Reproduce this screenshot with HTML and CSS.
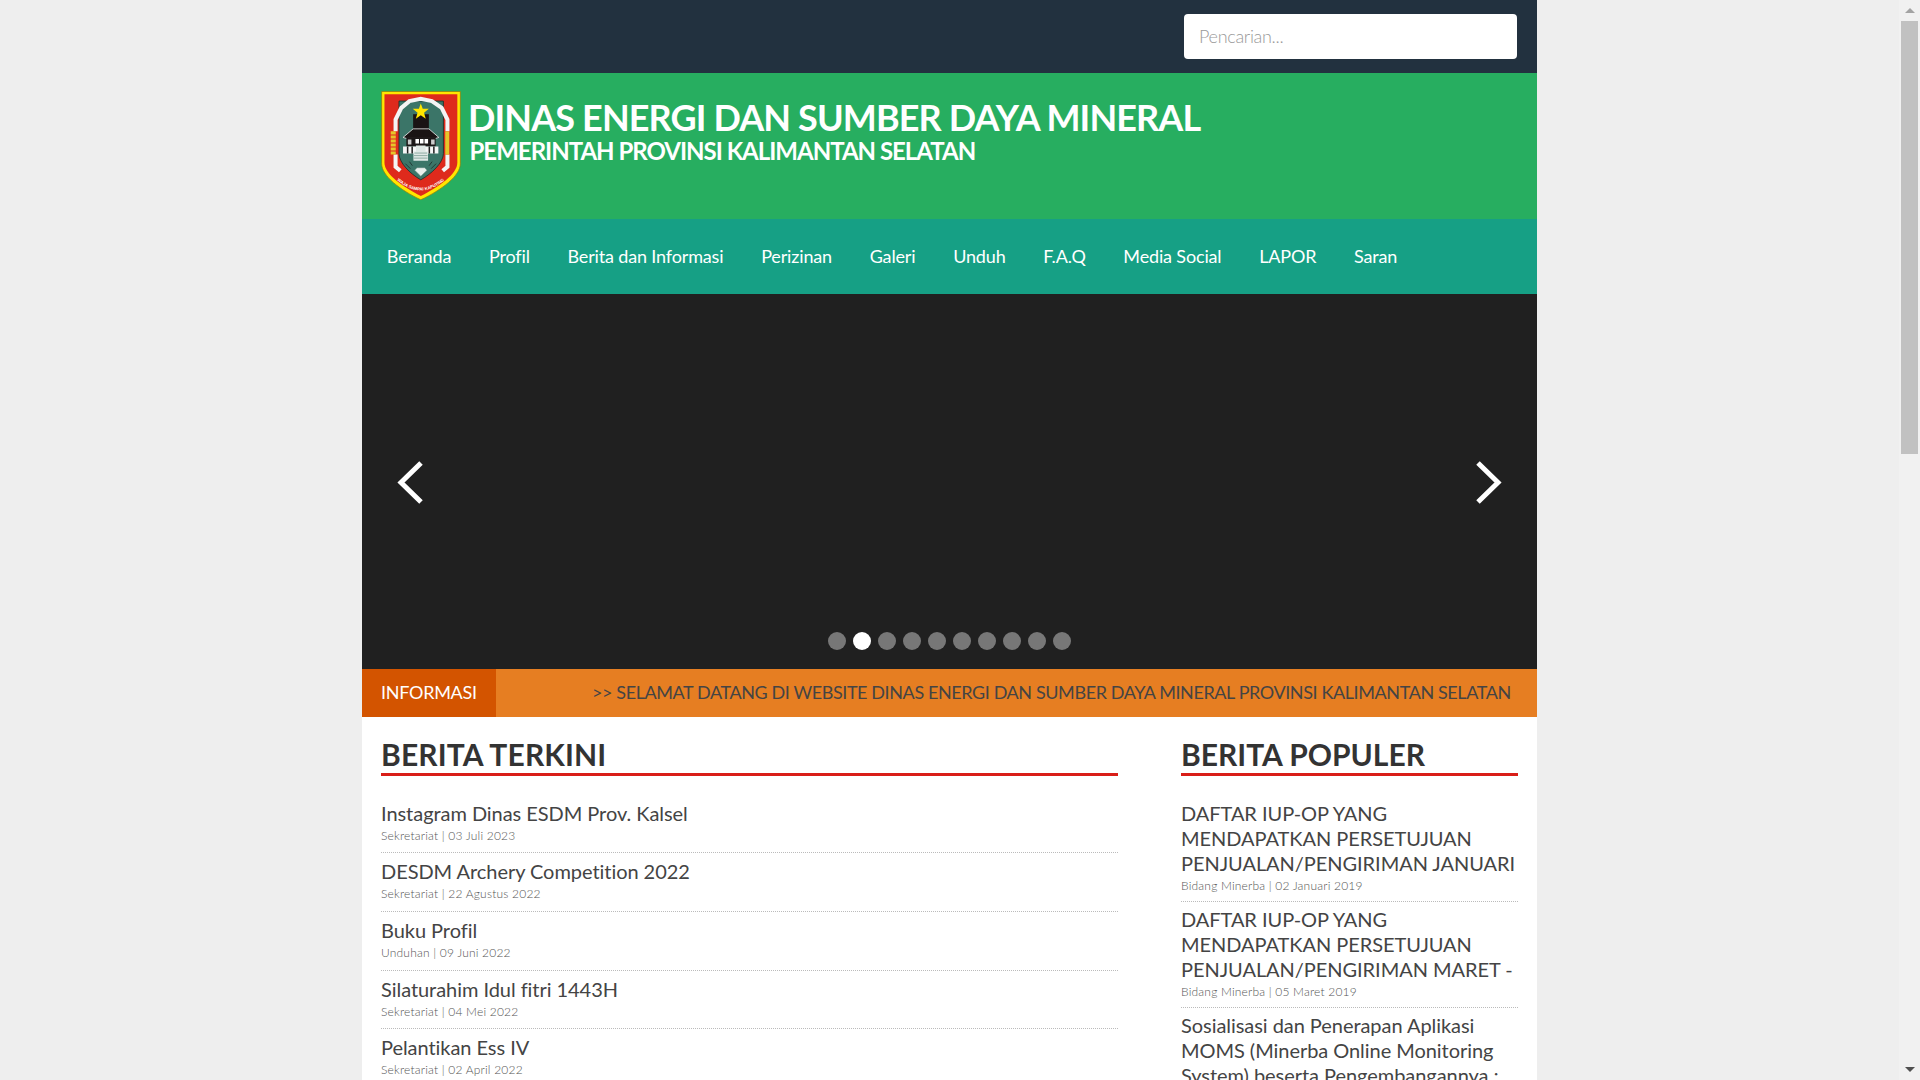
FILE: index.html
```html
<!DOCTYPE html>
<html lang="id">
<head>
<meta charset="utf-8">
<title>Dinas Energi dan Sumber Daya Mineral</title>
<link rel="stylesheet" href="styles.css">
</head>
<body>
<div class="viewport">
  <div class="page">
    <header class="topbar">
      <input class="search" type="text" placeholder="Pencarian...">
    </header>
    <div class="brand">
      <svg class="logo" viewBox="0 0 79 108" aria-label="Lambang Kalimantan Selatan">
        <path d="M.5.5H78.500V72C78.500 84 60 98 39.300 107.800 18.600 98 .5 84 .5 72Z" fill="#ffe600" stroke="#8a7a10" stroke-width=".7"/>
        <path d="M3.300 3.300H75.500V71C75.500 82 58 94.500 39.300 104 20.600 94.500 3.300 82 3.300 71Z" fill="#de2a1c"/>
        <path d="M17.700 10H61.700V62C61.700 71 50 82 39.300 88 28.600 82 17.700 71 17.700 62Z" fill="#3b7568" stroke="#14302a" stroke-width=".8"/>
        <path d="M14.300 40V28.300L20 16.700 28 10 39.300 7.700 50.300 10 60 16.700 65.700 28.300V40" fill="none" stroke="#f4f4f4" stroke-width="4"/>
        <path d="M14.300 63V75L19 79M65.700 63V75L61 79" fill="none" stroke="#f4f4f4" stroke-width="4"/>
        <path d="M12 40V63" stroke="#e6c52a" stroke-width="5" fill="none" stroke-dasharray="3 1"/>
        <path d="M65.500 40V63" stroke="#e6c52a" stroke-width="4" fill="none"/>
        <path d="M31.700 23H47.300V44H31.700Z" fill="#1a1414"/>
        <path d="M39.300 12.500 41.200 17.500 47.300 17.700 42.500 21.500 44.200 27.400 39.300 24 34.400 27.400 36.100 21.500 31.300 17.700 37.400 17.500Z" fill="#ffe600"/>
        <path d="M21.700 46 31.700 37.500H47.300L57.200 46 54 47H25Z" fill="#1a1414" stroke="#eee" stroke-width=".8"/>
        <path d="M25 46H54V55H25Z" fill="#1c1818"/>
        <path d="M34 47.500H37.500V52H34ZM38.500 47.500H42V52H38.500ZM43 47.500H46.500V52H43Z" fill="#fff"/>
        <path d="M26.500 48H30V53H26.500ZM49.500 48H53V53H49.500Z" fill="#ccc"/>
        <path d="M21.700 55H56.700V62H21.700Z" fill="#f6f6f6"/>
        <path d="M25.500 55H27V62H25.500ZM30 55H31.500V62H30ZM47 55H48.500V62H47ZM51.500 55H53V62H51.500Z" fill="#222"/>
        <path d="M34.500 54H44V60H46.500V69H32V60H34.500Z" fill="#dfe8e5"/>
        <path d="M33 61.500H45.500M32.500 64H46M32.500 66.500H46" stroke="#5b8479" stroke-width=".6"/>
        <path d="M24 72 29 77M54.500 72 49.500 77M28 70 31 74M50.500 70 47.500 74" stroke="#1c2c29" stroke-width=".8"/>
        <path d="M35.500 76H43.200L45.500 78.500 39.300 84.500 33.200 78.500Z" fill="#e8efec" stroke="#5b8479" stroke-width=".5"/>
        <path id="motto" d="M11.500 84.500Q39.300 112.500 67 84.500" fill="none"/>
        <text class="motto"><textPath href="#motto" startOffset="50%" text-anchor="middle">WAJA SAMPAI KAPUTING</textPath></text>
      </svg>
      <div class="brand-text">
        <h1>DINAS ENERGI DAN SUMBER DAYA MINERAL</h1>
        <h2>PEMERINTAH PROVINSI KALIMANTAN SELATAN</h2>
      </div>
    </div>
    <nav class="nav">
      <a>Beranda</a><a>Profil</a><a>Berita dan Informasi</a><a>Perizinan</a><a>Galeri</a><a>Unduh</a><a>F.A.Q</a><a>Media Social</a><a>LAPOR</a><a>Saran</a>
    </nav>
    <section class="slider">
      <svg class="arrow" viewBox="0 0 27 45"><path d="M24 3 4 22.500 24 42" fill="none" stroke="#fff" stroke-width="5"/></svg>
      <svg class="arrow" viewBox="0 0 27 45"><path d="M3 3 23 22.500 3 42" fill="none" stroke="#fff" stroke-width="5"/></svg>
      <div class="dots">
        <i></i><i class="on"></i><i></i><i></i><i></i><i></i><i></i><i></i><i></i><i></i>
      </div>
    </section>
    <div class="ticker">
      <span class="ticker-label">INFORMASI</span>
      <span class="ticker-text">&gt;&gt; SELAMAT DATANG DI WEBSITE DINAS ENERGI DAN SUMBER DAYA MINERAL PROVINSI KALIMANTAN SELATAN</span>
    </div>
    <main class="content">
      <section class="col-main">
        <h3>BERITA TERKINI</h3>
        <ul class="news">
          <li><a>Instagram Dinas ESDM Prov. Kalsel</a><small>Sekretariat | 03 Juli 2023</small></li>
          <li><a>DESDM Archery Competition 2022</a><small>Sekretariat | 22 Agustus 2022</small></li>
          <li><a>Buku Profil</a><small>Unduhan | 09 Juni 2022</small></li>
          <li><a>Silaturahim Idul fitri 1443H</a><small>Sekretariat | 04 Mei 2022</small></li>
          <li><a>Pelantikan Ess IV</a><small>Sekretariat | 02 April 2022</small></li>
        </ul>
      </section>
      <aside class="col-side">
        <h3>BERITA POPULER</h3>
        <ul class="news">
          <li><a>DAFTAR IUP-OP YANG MENDAPATKAN PERSETUJUAN PENJUALAN/PENGIRIMAN JANUARI</a><small>Bidang Minerba | 02 Januari 2019</small></li>
          <li><a>DAFTAR IUP-OP YANG MENDAPATKAN PERSETUJUAN PENJUALAN/PENGIRIMAN MARET -</a><small>Bidang Minerba | 05 Maret 2019</small></li>
          <li><a>Sosialisasi dan Penerapan Aplikasi MOMS (Minerba Online Monitoring System) beserta Pengembangannya ;</a><small>Bidang Minerba</small></li>
        </ul>
      </aside>
    </main>
  </div>
</div>
<div class="scrollbar">
  <span class="sb-btn"><b class="up"></b></span>
  <span class="sb-thumb"></span>
  <span class="sb-btn"><b class="down"></b></span>
</div>
</body>
</html>
```
FILE: styles.css
```css
* { box-sizing: border-box; }
html, body { margin: 0; height: 100%; overflow: hidden; }
body {
  display: flex;
  background: #eee;
  font-family: Lato, "Open Sans", sans-serif;
  font-size: 18px;
  color: #333;
}
.viewport { flex: 1; height: 1080px; overflow: hidden; }
.page { width: 1175px; margin: 0 auto; background: #fff; }

.topbar {
  height: 73px;
  background: #22313f;
  display: flex;
  justify-content: flex-end;
  align-items: flex-start;
  padding: 14px 20px 0 0;
}
.search {
  width: 333px;
  height: 45px;
  border: 0;
  border-radius: 4px;
  padding: 0 15px 2px;
  background: #fff;
  font: 300 18px Lato, sans-serif;
  letter-spacing: -0.3px;
}
.search::placeholder { color: #999; opacity: 1; }

.brand {
  height: 146px;
  background: #27ae60;
  display: flex;
  align-items: flex-start;
  gap: 7px;
  padding: 18px 0 0 19px;
  color: #fff;
}
.logo { width: 80px; height: 109px; flex: none; }
.motto { font: 700 4.200px "Liberation Sans", sans-serif; fill: #fff; }
.brand-text { padding-top: 8px; }
.brand-text h1 { margin: 0; font-size: 36px; font-weight: 700; line-height: 36px; letter-spacing: -0.87px; }
.brand-text h2 { margin: 0 0 0 1.500px; font-size: 24px; font-weight: 700; line-height: 32px; letter-spacing: -1px; }

.nav {
  height: 75px;
  background: #16a085;
  display: flex;
  align-items: center;
  padding: 0 0 2px 6px;
}
.nav a { padding: 0 18.850px; color: #fff; font-size: 18px; letter-spacing: -0.15px; }

.slider {
  height: 375px;
  background: #202020;
  position: relative;
  display: flex;
  justify-content: space-between;
  align-items: flex-start;
  padding: 166px 35px 0;
}
.arrow { width: 27px; height: 45px; }
.dots {
  position: absolute;
  left: 466px;
  top: 338px;
  display: flex;
  gap: 7px;
}
.dots i { width: 18px; height: 18px; border-radius: 50%; background: #777; }
.dots i.on { background: #fff; }

.ticker {
  height: 48px;
  background: #e67e22;
  display: flex;
  align-items: center;
  font-size: 18px;
  padding-bottom: 2px;
}
.ticker-label {
  flex: none;
  width: 134px;
  height: 48px;
  margin-bottom: -2px;
  background: #d35400;
  color: #fff;
  display: flex;
  align-items: center;
  padding: 0 0 2px 19px;
  letter-spacing: -0.27px;
}
.ticker-text { margin-left: 96px; color: #444; white-space: nowrap; letter-spacing: -0.4px; }

.content {
  display: flex;
  justify-content: space-between;
  padding: 0 19px;
}
.col-main { width: 737px; }
.col-side { width: 337px; }
h3 {
  margin: 19px 0 0;
  font-size: 30px;
  font-weight: 700;
  line-height: 37px;
  color: #333;
  border-bottom: 3px solid #d91e18;
}
.col-main h3 { letter-spacing: 0.15px; }
.news { list-style: none; margin: 18.700px 0 0; padding: 0; }
.news li { padding: 6px 0 8.670px; border-bottom: 1px dotted #bbb; }
.news a { display: block; font-size: 20px; line-height: 25px; color: #444; letter-spacing: -0.05px; }
.news small { display: block; margin-top: 1px; font-size: 12px; line-height: 17px; font-weight: 300; color: #555; letter-spacing: 0.2px; }
.col-side .news { margin-top: 19.700px; }
.col-side .news li { padding: 5px 0 7px; }

.scrollbar {
  width: 21px;
  height: 1080px;
  flex: none;
  background: #f1f1f1;
  display: flex;
  flex-direction: column;
  align-items: center;
  justify-content: space-between;
}
.sb-btn { height: 21px; display: flex; align-items: center; }
.sb-btn b { width: 0; height: 0; border: 5px solid transparent; border-top: 0; border-bottom: 5px solid #a3a3a3; }
.sb-btn b.down { border-top: 5px solid #505050; border-bottom: 0; }
.sb-thumb { width: 17px; height: 433px; background: #c1c1c1; margin-bottom: auto; }
```
